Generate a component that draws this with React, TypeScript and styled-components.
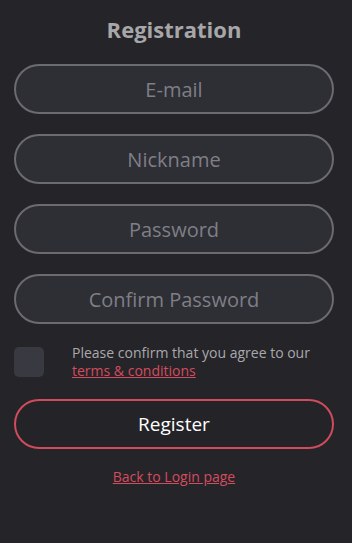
import React from "react";
import styled, { createGlobalStyle } from "styled-components";

const Global = createGlobalStyle`
  html, body { margin: 0; padding: 0; background: #252429; }
  body { font-family: "Open Sans", "Lato", sans-serif; }
  * { box-sizing: border-box; }
`;

const Page = styled.div`
  width: 352px;
  min-height: 543px;
  background: #252429;
  padding: 12px 18px 0 14px;
  display: flex;
  flex-direction: column;
`;

const Title = styled.h1`
  margin: 0;
  height: 36px;
  line-height: 34px;
  text-align: center;
  font-size: 22px;
  font-weight: 700;
  color: #a7a7aa;
`;

const Fields = styled.div`
  margin-top: 16px;
  display: flex;
  flex-direction: column;
  gap: 20px;
`;

const Input = styled.input`
  width: 320px;
  height: 50px;
  border-radius: 25px;
  border: 2px solid #6c6c70;
  background: #2e2e35;
  color: #c0c0c4;
  font-family: inherit;
  font-size: 20px;
  text-align: center;
  outline: none;
  &::placeholder { color: #7f7f86; }
`;

const ConsentRow = styled.label`
  margin-top: 23px;
  height: 34px;
  display: flex;
  align-items: flex-start;
  gap: 28px;
`;

const Box = styled.span`
  flex: none;
  width: 30px;
  height: 30px;
  border-radius: 5px;
  background: #393941;
`;

const ConsentText = styled.span`
  margin-top: -3px;
  font-size: 14px;
  line-height: 18px;
  color: #a9a9ac;
`;

const Link = styled.a`
  color: #d44c5e;
  text-decoration: underline;
  cursor: pointer;
`;

const RegisterButton = styled.button`
  margin-top: 18px;
  width: 320px;
  height: 50px;
  border-radius: 25px;
  border: 2px solid #cf4c5c;
  background: #242328;
  color: #ffffff;
  font-family: inherit;
  font-size: 19px;
`;

const Back = styled.div`
  margin-top: 18px;
  text-align: center;
  font-size: 14px;
`;

export default function App() {
  return (
    <>
      <Global />
      <Page>
        <Title>Registration</Title>
        <Fields>
          <Input placeholder="E-mail" />
          <Input placeholder="Nickname" />
          <Input placeholder="Password" type="password" />
          <Input placeholder="Confirm Password" type="password" />
        </Fields>
        <ConsentRow>
          <Box />
          <ConsentText>
            Please confirm that you agree to our
            <br />
            <Link>terms &amp; conditions</Link>
          </ConsentText>
        </ConsentRow>
        <RegisterButton>Register</RegisterButton>
        <Back>
          <Link>Back to Login page</Link>
        </Back>
      </Page>
    </>
  );
}
